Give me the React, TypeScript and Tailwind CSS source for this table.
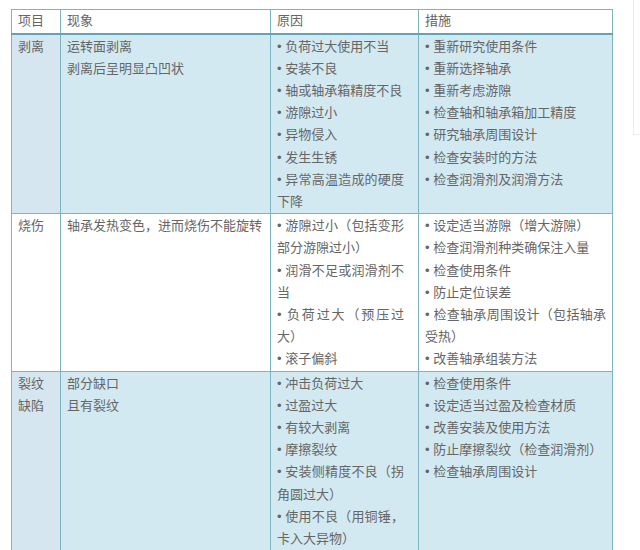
import React from 'react'

type Row = {
  item: string[]
  symptom: string[]
  causes: string[]
  fixes: string[]
  tint: boolean
}

const ROWS: Row[] = [
  {
    item: ['剥离'],
    symptom: ['运转面剥离', '剥离后呈明显凸凹状'],
    causes: ['负荷过大使用不当', '安装不良', '轴或轴承箱精度不良', '游隙过小', '异物侵入', '发生生锈', '异常高温造成的硬度下降'],
    fixes: ['重新研究使用条件', '重新选择轴承', '重新考虑游隙', '检查轴和轴承箱加工精度', '研究轴承周围设计', '检查安装时的方法', '检查润滑剂及润滑方法'],
    tint: true,
  },
  {
    item: ['烧伤'],
    symptom: ['轴承发热变色，进而烧伤不能旋转'],
    causes: ['游隙过小（包括变形部分游隙过小）', '润滑不足或润滑剂不当', '负荷过大（预压过大）', '滚子偏斜'],
    fixes: ['设定适当游隙（增大游隙）', '检查润滑剂种类确保注入量', '检查使用条件', '防止定位误差', '检查轴承周围设计（包括轴承受热）', '改善轴承组装方法'],
    tint: false,
  },
  {
    item: ['裂纹', '缺陷'],
    symptom: ['部分缺口', '且有裂纹'],
    causes: ['冲击负荷过大', '过盈过大', '有较大剥离', '摩擦裂纹', '安装侧精度不良（拐角圆过大）', '使用不良（用铜锤，卡入大异物）'],
    fixes: ['检查使用条件', '设定适当过盈及检查材质', '改善安装及使用方法', '防止摩擦裂纹（检查润滑剂）', '检查轴承周围设计'],
    tint: true,
  },
]

const cell = 'border border-[#7db3c2] pl-[6px] pt-[1px] pb-0 align-top text-justify'

function Lines({ lines, bullet }: { lines: string[]; bullet?: boolean }) {
  return (
    <>
      {lines.map((t) => (
        <p key={t}>{bullet ? `• ${t}` : t}</p>
      ))}
    </>
  )
}

export default function App() {
  return (
    <div className="flex h-[550px] w-[640px] overflow-hidden bg-white">
      <div className="w-[633px] pl-[11px] pt-[9px]">
        <table
          className="w-[601px] table-fixed border-collapse text-[13px] leading-[22.2px] text-[#666]"
          style={{ fontFamily: '"Liberation Sans", "Noto Sans CJK SC", sans-serif' }}
        >
          <colgroup>
            <col className="w-[49px]" />
            <col className="w-[210px]" />
            <col className="w-[148px]" />
            <col className="w-[194px]" />
          </colgroup>
          <thead>
            <tr className="h-[24px] bg-white">
              {['项目', '现象', '原因', '措施'].map((h) => (
                <th
                  key={h}
                  className="border border-b-2 border-[#7db3c2] border-b-[#5fa3b8] px-[6px] text-left align-middle font-normal"
                >
                  {h}
                </th>
              ))}
            </tr>
          </thead>
          <tbody>
            {ROWS.map((r) => (
              <tr key={r.item.join('')} className={r.tint ? 'bg-[#d3e9f1]' : 'bg-white'}>
                <td className={`${cell} pr-[6px] ${r.tint ? 'bg-[#d5e6f1]' : ''}`}>
                  <Lines lines={r.item} />
                </td>
                <td className={`${cell} pr-[6px]`}>
                  <Lines lines={r.symptom} />
                </td>
                <td className={`${cell} pr-[14px]`}>
                  <Lines lines={r.causes} bullet />
                </td>
                <td className={`${cell} pr-[6px]`}>
                  <Lines lines={r.fixes} bullet />
                </td>
              </tr>
            ))}
            <tr className="h-[40px] bg-white">
              <td className={cell} />
              <td className={cell} />
              <td className={cell} />
              <td className={cell} />
            </tr>
          </tbody>
        </table>
      </div>
      <div className="h-[135px] w-[7px] border-b border-l border-[#ececec]" />
    </div>
  )
}
